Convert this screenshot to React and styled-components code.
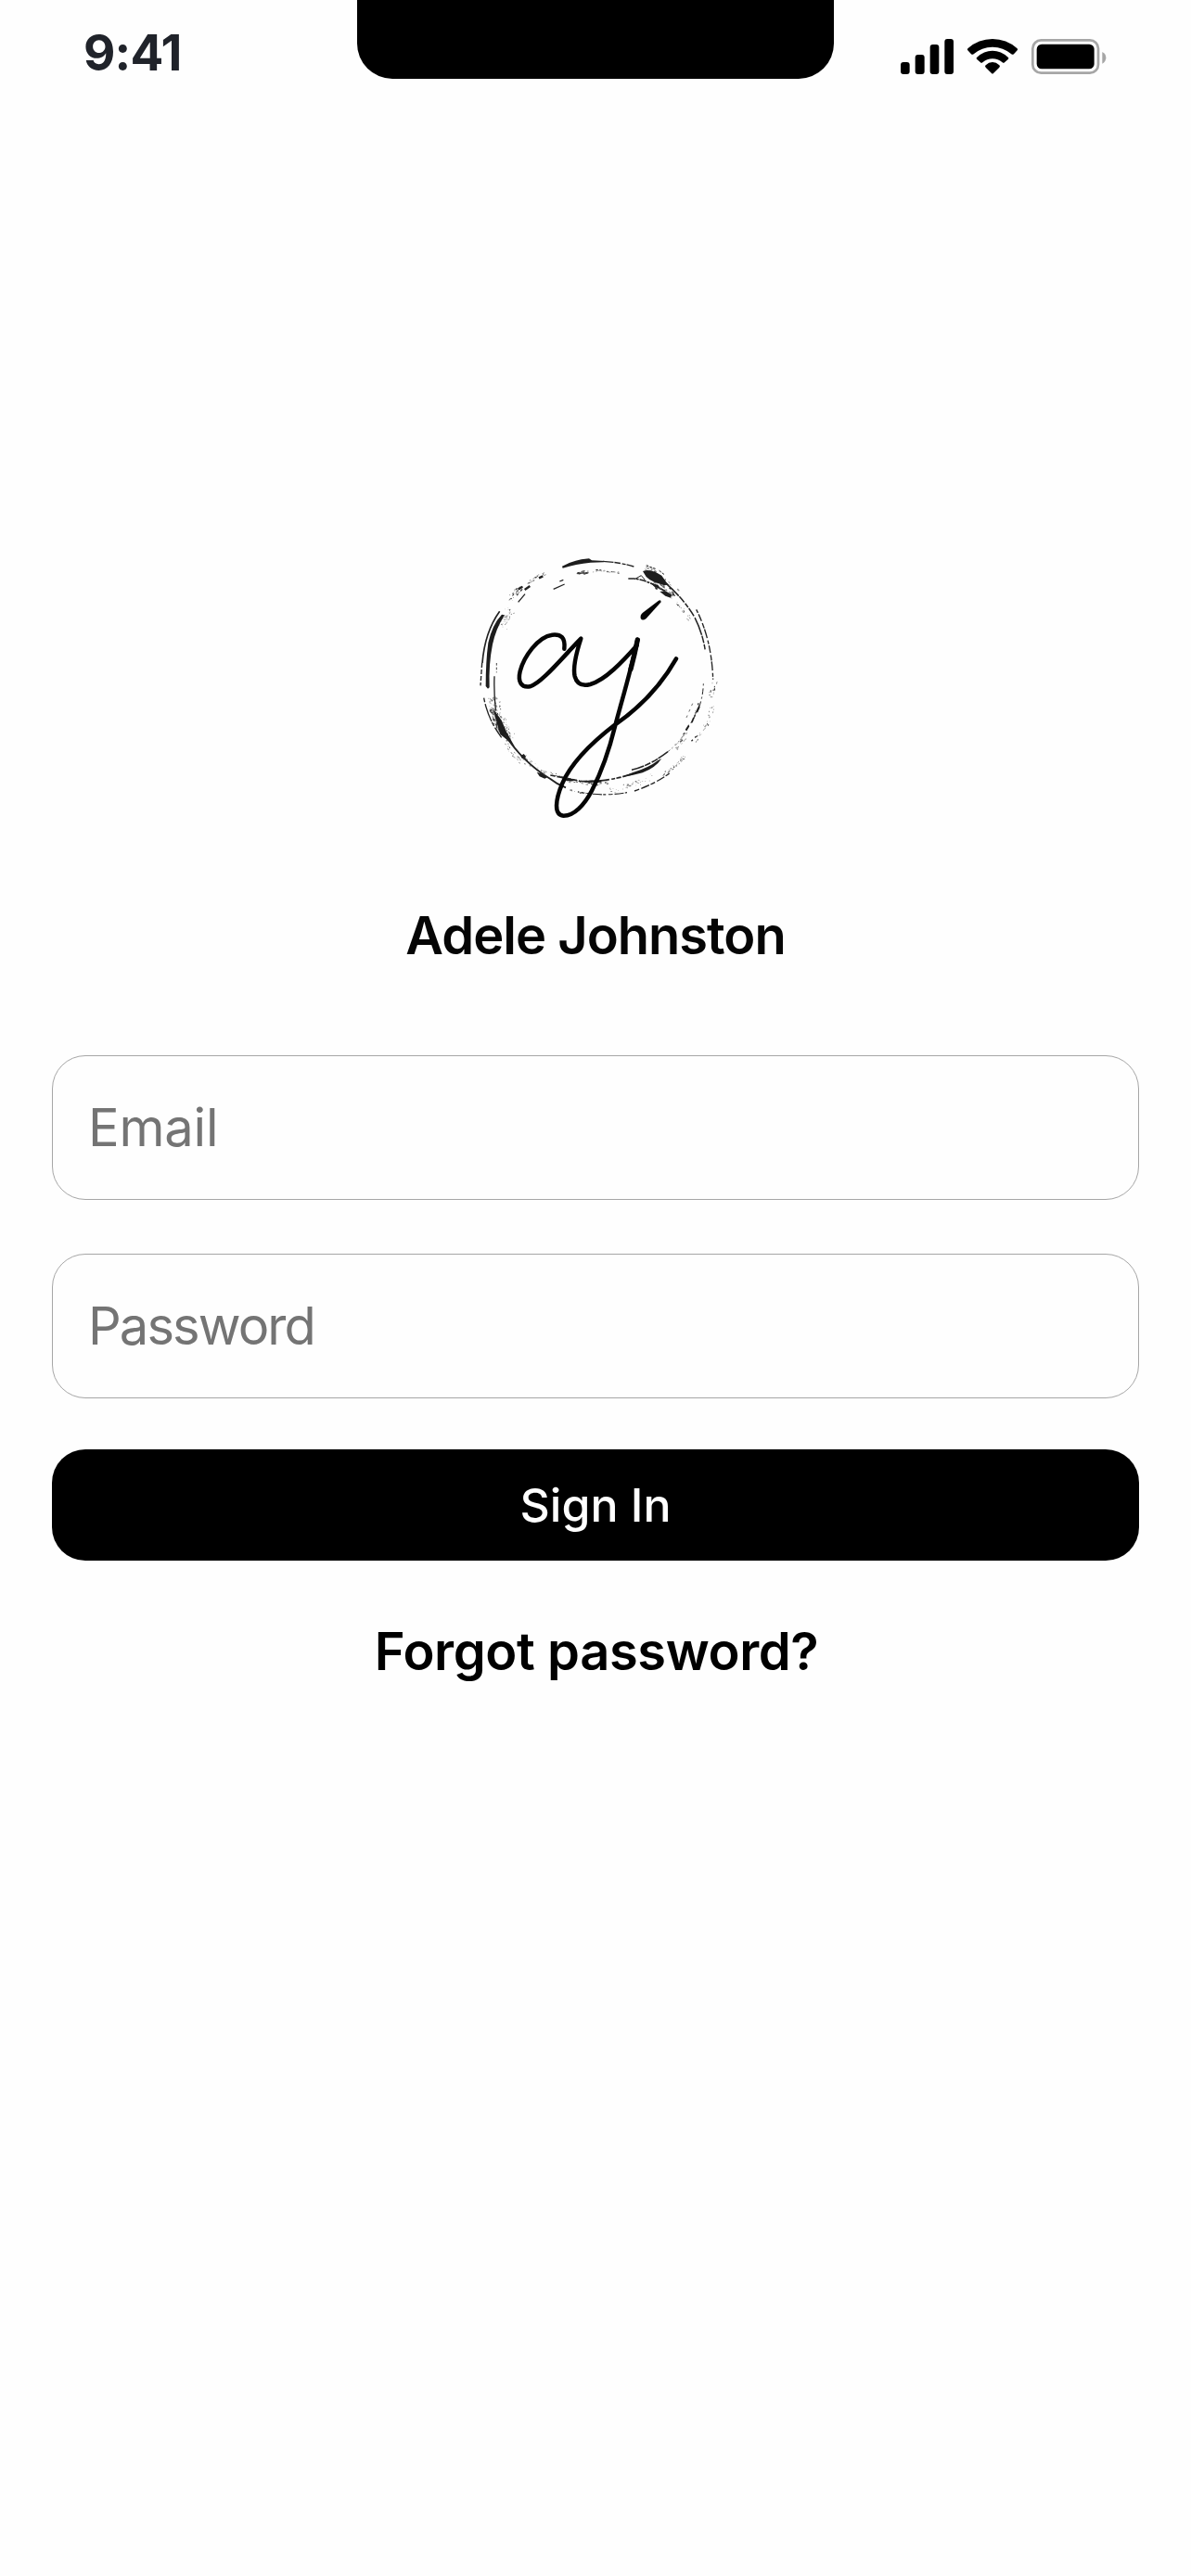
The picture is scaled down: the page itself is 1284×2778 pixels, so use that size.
import React, { useState } from "react";
import styled, { createGlobalStyle } from "styled-components";

// dry-brush specks: [angle from, angle to, radius, spread, amount, size]
const SPECKS = [
  [-152, -142, 352, 22, 55, 2.2],
  [-139, -130, 380, 12, 26, 4],
  [-128, -116, 376, 8, 18, 4],
  [-101, -94, 342, 7, 24, 4.5],
  [-93, -78, 344, 5, 26, 3.4],
  [-66, -58, 390, 10, 24, 3.4],
  [-60, -46, 366, 26, 60, 4.4],
  [-44, -32, 352, 10, 22, 3],
  [2, 10, 376, 14, 14, 4],
  [14, 24, 384, 10, 16, 3],
  [14, 24, 338, 4, 10, 4.5],
  [32, 42, 342, 12, 26, 3.2],
  [24, 36, 382, 8, 12, 2.8],
  [42, 56, 382, 8, 44, 2.6],
  [60, 84, 366, 12, 34, 2.8],
  [84, 116, 344, 8, 50, 3.6],
  [94, 104, 376, 4, 14, 3.4],
  [118, 134, 352, 20, 26, 3],
  [132, 144, 368, 12, 26, 3],
  [144, 169, 344, 22, 150, 2.8],
  [150, 163, 358, 10, 50, 4.4],
];

const makeSpecks = () => {
  let seed = 11;
  const rand = () => {
    seed = (seed * 16807) % 2147483647;
    return seed / 2147483647;
  };
  const list = [];
  SPECKS.forEach(([from, to, radius, spread, amount, size]) => {
    for (let i = 0; i < amount; i++) {
      const deg = from + rand() * (to - from);
      const r = radius + (rand() + rand() - 1) * spread;
      const rad = (deg * Math.PI) / 180;
      list.push({
        x: 432 + r * Math.cos(rad),
        y: 451 + r * Math.sin(rad),
        rx: size * (0.3 + rand()),
        ry: size * (0.2 + rand() * 0.4),
        turn: deg + 90,
        opacity: 0.3 + rand() * 0.6,
      });
    }
  });
  return list;
};

const specks = makeSpecks();

function Logo() {
  return (
    <StLogo viewBox="0 0 900 960" aria-label="AJ">
      <g fill="#1d1d1d">
        {specks.map((s, i) => (
          <ellipse
            key={i}
            cx={s.x}
            cy={s.y}
            rx={s.rx}
            ry={s.ry}
            opacity={s.opacity}
            transform={`rotate(${s.turn} ${s.x} ${s.y})`}
          />
        ))}
        <path d="M318 92Q338 80 362 74L380 70L405 67L414 73L456 75L452 79L410 80Q362 84 320 98Z" />
        <path d="M579 108Q598 101 622 112L640 122L656 145L664 152L648 153Q606 143 590 126Z" />
        <path d="M634 174L652 172L673 184L669 194L652 188Z" />
        <path d="M604 146L628 152L636 164L618 160Z" />
        <path d="M123 248L132 250Q104 294 93 345Q80 410 83 484L78 488L71 480Q71 400 79 340Q92 280 123 248Z" />
        <path d="M95 553Q108 572 122 590L138 628L166 678L148 660L118 636Q108 605 95 553Z" />
        <path d="M184 706L194 699L201 707L196 716L188 713Z" />
        <path d="M236 758L252 763L270 775L262 779L245 772Z" />
        <path d="M545 768L512 773L545 760Q600 743 628 720L640 714Q620 744 578 760Z" />
        <path d="M325 776L352 780L356 787L332 787Z" />
        <path d="M388 786L445 783L445 791L392 791Z" />
        <path d="M748 578L740 598L733 600L741 582Z" />
        <path d="M761 540L764 548L756 566L751 562Z" />
        <path d="M727 604L730 610L721 625L716 621Z" />
      </g>
      <g fill="none" stroke="#222" strokeWidth="4">
        <path d="M450 76Q505 79 550 93" strokeDasharray="34 3 20 5 12 3" />
        <path d="M290 166L326 150M310 141L322 136M176 208L198 182" />
        <path d="M176 166L190 158M197 168L214 156M243 130L256 124" strokeWidth="7" />
        <path d="M532 132L556 132L582 138L612 150L650 172" strokeWidth="5" strokeDasharray="22 3 9 3" />
        <path d="M552 134L574 122L586 136" strokeWidth="3" />
        <path d="M652 146Q712 198 746 256Q772 306 781 365" strokeWidth="4.5" strokeDasharray="60 3 24 5 16 4 30 6" />
        <path d="M752 232Q802 330 806 458" strokeDasharray="12 5 24 7 18 3 30 8" />
        <path d="M116 238Q68 305 60 405" strokeWidth="5" />
        <path d="M59 405L54 478" strokeDasharray="15 6" />
        <path d="M106 405L106 436" strokeWidth="2.5" strokeDasharray="8 6" />
        <path d="M99 448Q97 512 104 560" />
        <path d="M65 518Q78 588 122 646" strokeDasharray="14 6 60 3" />
        <path d="M132 635Q190 725 280 780Q302 798 330 808" strokeWidth="5.5" />
        <path d="M280 768Q345 780 375 787Q460 792 548 763" strokeWidth="5" strokeDasharray="16 5 28 7 12 4" />
        <path d="M543 751Q600 738 660 692" strokeDasharray="42 3 20 5 22 2" strokeWidth="4.5" />
        <path d="M660 692Q700 660 715 630" strokeWidth="2" strokeDasharray="9 7 5 9" />
        <path d="M380 824Q455 837 528 824" strokeDasharray="9 8 14 6 30 4" strokeWidth="3.5" />
        <path d="M552 819Q615 798 665 762" strokeDasharray="16 7 28 5" />
        <path d="M775 472Q774 510 762 545" strokeDasharray="6 9 20 8" strokeWidth="3" />
        <path d="M740 536L720 582" strokeWidth="2" strokeDasharray="8 13" />
        <path d="M752 642L732 662" strokeWidth="4" strokeDasharray="6 10" />
        <path d="M590 90L620 100M632 106L650 120" strokeWidth="3" strokeDasharray="8 4" />
      </g>
      <g fill="none" stroke="#050505" strokeLinecap="round" strokeLinejoin="round">
        <path
          d="M325 359C329 322 314 311 286 314C240 320 194 384 182 432C174 466 186 486 214 481C252 470 318 388 379 326C362 378 352 418 359 448C366 474 385 480 409 474C458 460 514 400 560 348"
          strokeWidth="13.5"
        />
        <path
          d="M562 329C540 432 510 530 489 610C470 688 444 760 414 818C390 864 356 900 322 899C290 896 297 846 318 796C350 722 430 650 490 604C574 546 640 474 687 391"
          strokeWidth="13.5"
        />
        <path d="M562 330Q552 380 540 425" strokeWidth="16" />
      </g>
      <path fill="#050505" d="M572 260Q570 250 578 243L630 203Q638 199 638 208L590 261Q577 271 572 260Z" />
    </StLogo>
  );
}

function StatusIcons() {
  return (
    <StIcons>
      <svg width="57" height="38" viewBox="93 66 171 114">
        <rect x="93" y="141" width="29" height="39" rx="9" />
        <rect x="140" y="117" width="30" height="63" rx="9" />
        <rect x="188" y="84" width="29" height="96" rx="9" />
        <rect x="235" y="66" width="29" height="114" rx="9" />
      </svg>
      <svg width="54" height="38" viewBox="309 66 162 114">
        <path d="M311 96Q345 66 390 66Q435 66 469 96Q473 99 470 103L459 115Q455 118 451 115Q425 92 390 92Q355 92 329 115Q325 118 321 115L310 103Q307 99 311 96Z" />
        <path d="M340 125Q362 104 390 104Q418 104 440 125Q444 128 441 131L429 142Q426 145 422 142Q408 130 390 130Q372 130 358 142Q354 145 351 142L339 131Q336 128 340 125Z" />
        <path d="M368 151Q378 141 390 141Q402 141 412 151Q416 154 412 158L393 177Q390 180 387 177L368 158Q364 154 368 151Z" />
      </svg>
      <svg width="81" height="38" viewBox="516 66 243 114">
        <rect x="520" y="70" width="212" height="106" rx="27" fill="none" stroke="#a6a6a6" strokeWidth="8" />
        <rect x="533" y="83" width="186" height="80" rx="16" />
        <path d="M745 108Q757 114 757 127Q757 140 745 146Z" fill="#a6a6a6" />
      </svg>
    </StIcons>
  );
}

export default function App() {
  const [email, setEmail] = useState("");
  const [password, setPassword] = useState("");

  const handleSubmit = (e) => {
    e.preventDefault();
  };

  return (
    <StScreen>
      <GlobalStyle />
      <StStatusBar>
        <StTime>9:41</StTime>
        <StNotch />
        <StatusIcons />
      </StStatusBar>
      <StMain>
        <Logo />
        <StName>Adele Johnston</StName>
        <StForm onSubmit={handleSubmit}>
          <StInput
            type="email"
            placeholder="Email"
            $spacing="-0.2px"
            value={email}
            onChange={(e) => setEmail(e.target.value)}
          />
          <StInput
            type="password"
            placeholder="Password"
            $spacing="-1.9px"
            value={password}
            onChange={(e) => setPassword(e.target.value)}
          />
          <StButton type="submit">Sign In</StButton>
        </StForm>
        <StForgot href="#">Forgot password?</StForgot>
      </StMain>
    </StScreen>
  );
}

const GlobalStyle = createGlobalStyle`
  * {
    box-sizing: border-box;
  }

  body {
    margin: 0;
    background-color: #fefefe;
    font-family: Inter, "Liberation Sans", sans-serif;
  }
`;

const StScreen = styled.div`
  width: 1284px;
  height: 2778px;
  overflow: hidden;
`;

const StStatusBar = styled.header`
  display: grid;
  grid-template-columns: 385px 514px 385px;
  height: 112px;
`;

const StTime = styled.div`
  padding: 32px 0 0 90px;
  font-size: 53px;
  font-weight: 700;
  line-height: 50px;
  letter-spacing: -0.8px;
  color: #20232a;
`;

const StNotch = styled.div`
  height: 85px;
  border-radius: 0 0 38px 38px;
  background-color: #000;
`;

const StIcons = styled.div`
  display: flex;
  align-items: flex-start;
  gap: 15px;
  padding: 42px 0 0 72px;
`;

const StMain = styled.main`
  display: flex;
  flex-direction: column;
  align-items: center;
  padding: 468px 56px 0;
`;

const StLogo = styled.svg`
  width: 300px;
  height: 320px;
  margin-left: 16px;
`;

const StName = styled.h1`
  margin: 74px 0 0;
  font-size: 56px;
  font-weight: 600;
  line-height: 70px;
  letter-spacing: -1px;
  color: #050505;
`;

const StForm = styled.form`
  display: flex;
  flex-direction: column;
  width: 100%;
  margin-top: 94px;
`;

const StInput = styled.input`
  height: 156px;
  margin-bottom: 58px;
  padding: 0 38px;
  border: 1px solid #a6a6a6;
  border-radius: 36px;
  outline: 0;
  background-color: transparent;
  font-family: inherit;
  font-size: 56px;
  letter-spacing: ${({ $spacing }) => $spacing};

  &::placeholder {
    color: #747474;
    opacity: 1;
  }
`;

const StButton = styled.button`
  height: 120px;
  margin-top: -3px;
  border: 0;
  border-radius: 36px;
  background-color: #000;
  font-family: inherit;
  font-size: 50px;
  font-weight: 500;
  color: #fff;
`;

const StForgot = styled.a`
  margin-top: 63px;
  padding-left: 2px;
  font-size: 56px;
  font-weight: 600;
  line-height: 70px;
  letter-spacing: -0.4px;
  color: #000;
  text-decoration: none;
`;
